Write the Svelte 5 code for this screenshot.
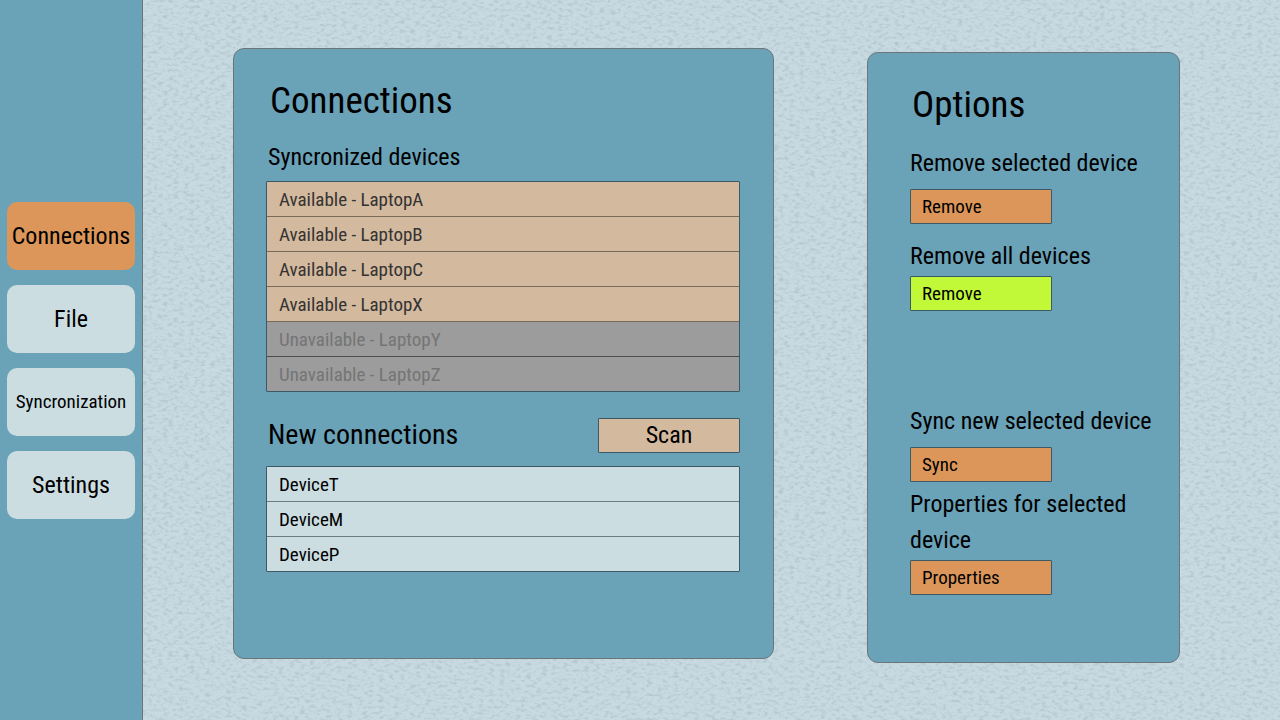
<script>
  const pages = ['Connections', 'File', 'Syncronization', 'Settings'];
  let page = $state('Connections');

  const synced = [
    { name: 'LaptopA', available: true },
    { name: 'LaptopB', available: true },
    { name: 'LaptopC', available: true },
    { name: 'LaptopX', available: true },
    { name: 'LaptopY', available: false },
    { name: 'LaptopZ', available: false }
  ];
  const found = ['DeviceT', 'DeviceM', 'DeviceP'];
</script>

<div class="app">
  <svg class="texture" aria-hidden="true">
    <filter id="grain" x="0" y="0" width="100%" height="100%" color-interpolation-filters="sRGB">
      <feTurbulence type="fractalNoise" baseFrequency="0.19 0.33" numOctaves="4" seed="21" />
      <feColorMatrix values="0 0 0 0 0.66  0 0 0 0 0.74  0 0 0 0 0.77  1.8 0 0 0 -0.82" />
    </filter>
    <rect width="100%" height="100%" filter="url(#grain)" />
  </svg>

  <nav class="sidebar">
    {#each pages as item}
      <button
        class="tab"
        class:active={page === item}
        class:long={item.length > 12}
        onclick={() => (page = item)}>{item}</button>
    {/each}
  </nav>

  <main class="content">
    <section class="panel connections">
      <h1>Connections</h1>
      <h2>Syncronized devices</h2>
      <ul class="list synced">
        {#each synced as device}
          <li>
            <button class="row" disabled={!device.available}>
              {device.available ? 'Available' : 'Unavailable'} - {device.name}
            </button>
          </li>
        {/each}
      </ul>
      <div class="scan-bar">
        <h2>New connections</h2>
        <button class="action scan">Scan</button>
      </div>
      <ul class="list found">
        {#each found as name}
          <li><button class="row">{name}</button></li>
        {/each}
      </ul>
    </section>

    <section class="panel options">
      <h1>Options</h1>
      <div class="option">
        <h2 id="remove-one">Remove selected device</h2>
        <button class="action" aria-describedby="remove-one">Remove</button>
      </div>
      <div class="option tight">
        <h2 id="remove-all">Remove all devices</h2>
        <button class="action lime" aria-describedby="remove-all">Remove</button>
      </div>
      <div class="option new-device">
        <h2 id="sync-new">Sync new selected device</h2>
        <button class="action" aria-describedby="sync-new">Sync</button>
      </div>
      <div class="option tight">
        <h2 id="properties">Properties for selected device</h2>
        <button class="action" aria-describedby="properties">Properties</button>
      </div>
    </section>
  </main>
</div>

<style>
  :global(body) {
    margin: 0;
  }

  .app {
    position: relative;
    isolation: isolate;
    display: flex;
    min-height: 100vh;
    background: #c8dae1;
    color: #000;
    font-family: 'Agency FB', 'Liberation Sans Narrow', 'Roboto Condensed', 'Liberation Sans', sans-serif;
  }

  .texture {
    position: absolute;
    inset: 0;
    z-index: -1;
    width: 100%;
    height: 100%;
  }

  h1,
  h2,
  ul {
    margin: 0;
    padding: 0;
    font-weight: 400;
  }

  h1 {
    font-size: 37px;
    line-height: 48px;
  }

  h2 {
    font-size: 24px;
    line-height: 36px;
  }

  button {
    box-sizing: border-box;
    margin: 0;
    font-family: inherit;
    color: inherit;
    cursor: pointer;
  }

  .sidebar {
    box-sizing: border-box;
    flex: none;
    width: 143px;
    padding: 0 7px;
    display: flex;
    flex-direction: column;
    justify-content: center;
    gap: 15px;
    background: #6aa2b8;
    border-right: 1px solid #6c7679;
  }

  .tab {
    height: 68px;
    padding: 0;
    border: 0;
    border-radius: 10px;
    background: #ccdde1;
    font-size: 24px;
  }

  .tab.active {
    background: #dc965a;
  }

  .tab.long {
    font-size: 19px;
  }

  .content {
    flex: 1;
    display: grid;
    grid-template-columns: 541fr 313fr;
    column-gap: 93px;
    align-items: start;
    padding: 48px 100px 57px 90px;
  }

  .panel {
    box-sizing: border-box;
    min-height: calc(100vh - 109px);
    background: #6aa2b8;
    border: 1px solid #6c7679;
    border-radius: 11px;
  }

  .connections {
    padding: 28px 33px 32px 32px;
  }

  .connections h1 {
    padding-left: 4px;
    margin-bottom: 14px;
  }

  .connections h2 {
    padding-left: 2px;
  }

  .list {
    list-style: none;
    border: 1px solid #3c5a66;
    border-radius: 1px;
  }

  .synced {
    margin-top: 6px;
  }

  .found {
    margin-top: 13px;
  }

  .row {
    display: block;
    width: 100%;
    height: 34px;
    padding: 0 12px;
    border: 0;
    font-size: 19px;
    text-align: left;
    background: #ccdde1;
  }

  li + li {
    border-top: 1px solid #6e7b80;
  }

  .synced li + li {
    border-top-color: #7a6a5c;
  }

  .synced .row {
    background: #d3b99e;
    color: #333;
  }

  .synced .row:disabled {
    background: #9c9c9c;
    color: #757575;
    cursor: default;
  }

  .synced li:last-child {
    border-top-color: #4c4c4c;
  }

  .scan-bar {
    display: flex;
    align-items: center;
    justify-content: space-between;
    margin-top: 25px;
  }

  .scan-bar h2 {
    font-size: 28px;
  }

  .action {
    display: block;
    width: 142px;
    height: 35px;
    padding: 0 11px;
    border: 1px solid #3c5a66;
    border-radius: 1px;
    background: #dc965a;
    font-size: 19px;
    text-align: left;
  }

  .action.scan {
    background: #d3b99e;
    font-size: 24px;
    text-align: center;
  }

  .action.lime {
    background: #c1f837;
  }

  .options {
    margin-top: 4px;
    margin-bottom: -4px;
    padding: 28px 20px 32px 42px;
  }

  .options h1 {
    padding-left: 2px;
    margin-bottom: 16px;
  }

  .option {
    display: flex;
    flex-direction: column;
    align-items: flex-start;
    gap: 8px;
    margin-bottom: 14px;
  }

  .option.tight {
    gap: 2px;
  }

  .option.new-device {
    margin-top: 92px;
    margin-bottom: 4px;
  }
</style>
